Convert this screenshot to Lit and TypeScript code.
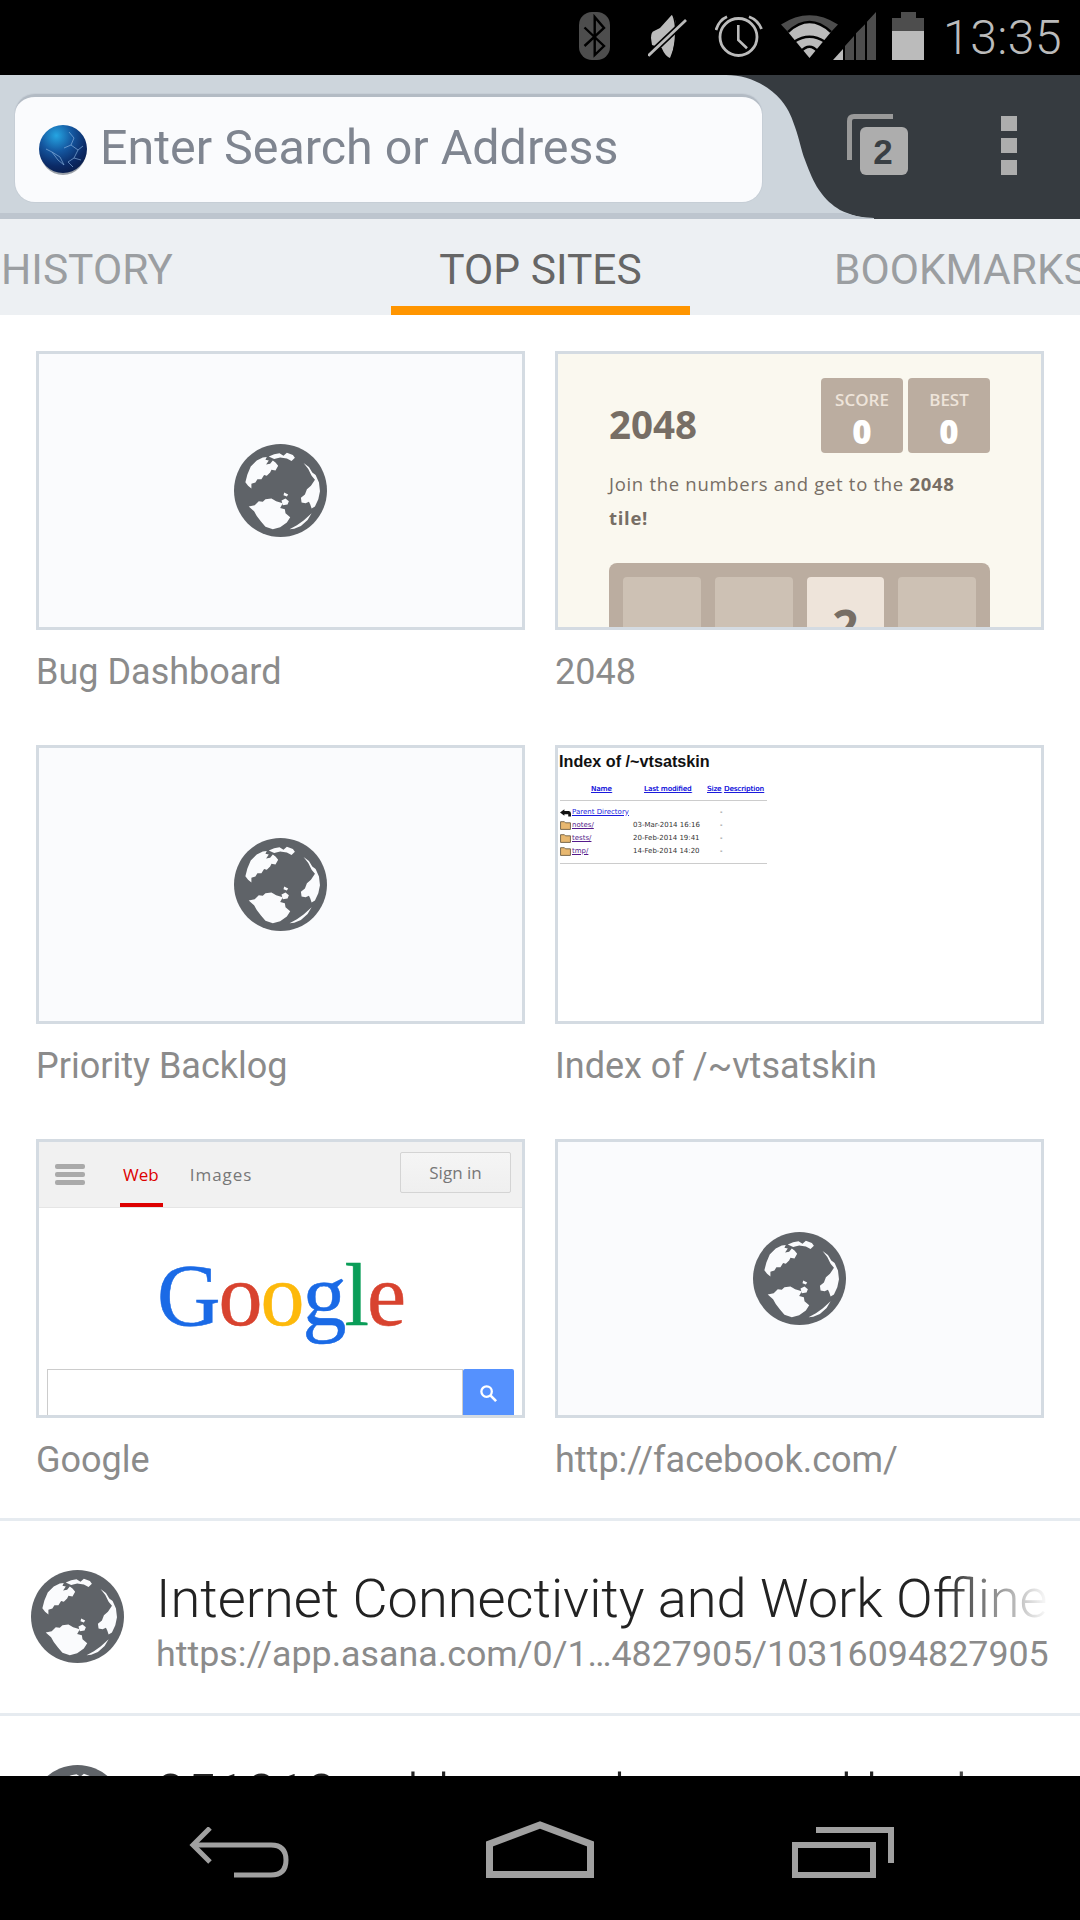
import { LitElement, css, html, svg } from 'lit'
import { customElement } from 'lit/decorators.js'

// globe drawn in the coordinates of the reference glyph, centre 303,270 r 139
const globe = (cls = 'globe') => html`<svg class=${cls} viewBox="164 131 278 278">
  <circle cx="303" cy="270" r="139" fill="#5f6368"></circle>
  ${svg`<g fill="#fafbfd">
    <polygon points="198,245 204,222 214,198 232,180 250,171 262,170 258,178 268,180 260,192 272,190 280,180 288,186 296,196 288,210 276,208 272,216 262,226 254,224 246,236 234,236 228,246 216,250 216,264 206,256"></polygon>
    <polygon points="268,168 284,162 300,159 312,166 322,157 340,164 346,172 336,182 322,174 302,171 284,176"></polygon>
    <polygon points="372,188 388,200 398,216 408,224 418,246 421,272 416,296 406,318 396,324 392,312 388,304 378,308 366,306 364,292 376,282 382,266 394,256 406,238 396,226 386,206"></polygon>
    <polygon points="208,318 226,314 238,302 250,304 258,296 276,294 290,302 310,308 302,322 316,326 318,338 332,350 322,366 302,380 280,386 258,378 244,362 232,346 224,332"></polygon>
    <polygon points="330,386 352,374 372,360 396,338 384,358 364,376 344,384"></polygon>
    <polygon points="306,300 318,294 328,302 324,312 310,314"></polygon>
    <polygon points="314,276 326,282 322,288 312,284"></polygon>
  </g>`}
</svg>`

const thumbGlobe = html`<div class="thumb blank">${globe()}</div>`

const game = html`<div class="thumb game">
  <div class="game-head">
    <span class="game-title">2048</span>
    <div class="scores">
      <div class="score"><span>SCORE</span><b>0</b></div>
      <div class="score"><span>BEST</span><b>0</b></div>
    </div>
  </div>
  <p class="game-intro">Join the numbers and get to the <b>2048 tile!</b></p>
  <div class="board">
    <div class="cell"></div>
    <div class="cell"></div>
    <div class="cell two">2</div>
    <div class="cell"></div>
  </div>
</div>`

const folder = html`<svg class="fold" viewBox="0 0 10 9"><path d="M0.5 1.5h3.5l1 1h4.5v6h-9z" fill="#e8b870" stroke="#5a4a30" stroke-width="0.7"></path></svg>`
const up = html`<svg class="fold" viewBox="0 0 10 9"><path d="M0 5L4 2V3.600H8Q10 3.600 10 6V8.500H7.500V6.500H4V8z" fill="#111"></path></svg>`

const indexRows = [
  { name: 'Parent Directory', date: '', icon: up, seen: false },
  { name: 'notes/', date: '03-Mar-2014 16:16', icon: folder, seen: true },
  { name: 'tests/', date: '20-Feb-2014 19:41', icon: folder, seen: true },
  { name: 'tmp/', date: '14-Feb-2014 14:20', icon: folder, seen: true }
]

const listing = html`<div class="thumb listing">
  <div class="index-title">Index of /~vtsatskin</div>
  <div class="index-table">
    <div class="index-head"><a class="c-name">Name</a><a class="c-date">Last modified</a><a class="c-size">Size</a><a>Description</a></div>
    <div class="index-rule"></div>
    ${indexRows.map((r) => html`<div class="index-row">
      ${r.icon}<span class="c-file"><a class=${r.seen ? 'seen' : ''}>${r.name}</a></span><span class="c-when">${r.date}</span><span>-</span>
    </div>`)}
    <div class="index-rule last"></div>
  </div>
</div>`

const google = html`<div class="thumb google">
  <div class="g-head">
    <div class="burger"><i></i><i></i><i></i></div>
    <span class="g-web">Web</span>
    <span class="g-images">Images</span>
    <span class="g-sign">Sign in</span>
  </div>
  <div class="g-logo"><span class="b">G</span><span class="r">o</span><span class="y">o</span><span class="b">g</span><span class="g">l</span><span class="r">e</span></div>
  <div class="g-search">
    <div class="g-input"></div>
    <div class="g-btn"><svg viewBox="0 0 20 20"><circle cx="8" cy="8" r="5.500" fill="none" stroke="#fff" stroke-width="2.400"></circle><path d="M12 12l6 6" stroke="#fff" stroke-width="2.800"></path></svg></div>
  </div>
</div>`

const sites = [
  { thumb: thumbGlobe, label: 'Bug Dashboard' },
  { thumb: game, label: '2048' },
  { thumb: thumbGlobe, label: 'Priority Backlog' },
  { thumb: listing, label: 'Index of /~vtsatskin' },
  { thumb: google, label: 'Google' },
  { thumb: thumbGlobe, label: 'http://facebook.com/' }
]

@customElement('app-root')
export class AppRoot extends LitElement {
  static styles = css`
    :host {
      display: flex;
      flex-direction: column;
      width: 1080px;
      height: 1920px;
      overflow: hidden;
      background: #fff;
      font-family: Roboto, sans-serif;
    }

    .status {
      flex: none;
      height: 75px;
      background: #000;
      display: flex;
      align-items: flex-start;
      color: #bbb;
    }
    .status svg { display: block; flex: none; margin-top: 12px; }
    .time {
      font-size: 48px;
      font-weight: 300;
      line-height: 75px;
      margin-left: 19px;
      letter-spacing: 0.5px;
    }
    .st-bt { margin-left: 579px; }
    .st-mute { margin-left: 38px; }
    .st-alarm { margin-left: 27px; }
    .st-wifi { margin-left: 18px; }
    .st-bars { margin-left: -6px; }
    .st-batt { margin-left: 15px; }

    .toolbar {
      flex: none;
      height: 144px;
      display: flex;
      background: #363b40;
    }
    .bar-light {
      width: 726px;
      background: #cdd5dc;
      border-bottom: 6px solid #bdc5ce;
      padding: 19px 0 0 15px;
      box-sizing: border-box;
      position: relative;
    }
    .url {
      width: 747px;
      height: 108px;
      box-sizing: border-box;
      background: #fafbfd;
      border-top: 3px solid #b3bbc4;
      border-radius: 20px;
      box-shadow: 0 0 0 1px #c6ced6;
      display: flex;
      align-items: center;
      position: relative;
      z-index: 1;
    }
    .fox {
      display: block;
      width: 50px;
      height: 52px;
      margin-left: 23px;
      flex: none;
    }
    .url span {
      margin-left: 12px;
      padding-bottom: 4px;
      font-size: 48.4px;
      color: #7f8590;
      white-space: nowrap;
    }
    .curve { display: block; flex: none; width: 154px; height: 144px; }
    .tools { flex: 1; position: relative; }
    .tabs-icon { position: absolute; left: -33px; top: 39px; width: 62px; height: 62px; }
    .tabs-num {
      position: absolute;
      left: -21px;
      top: 52px;
      width: 48px;
      height: 48px;
      text-align: center;
      line-height: 50px;
      font-family: "Liberation Sans", sans-serif;
      font-weight: 700;
      font-size: 35px;
      color: #3a3f44;
    }
    .menu {
      position: absolute;
      left: 121px;
      top: 41px;
      display: flex;
      flex-direction: column;
      gap: 7px;
    }
    .menu i { display: block; width: 16px; height: 15px; background: #adadad; }

    .tabs {
      flex: none;
      height: 96px;
      background: #edf0f3;
      display: flex;
      align-items: flex-start;
      overflow: hidden;
      position: relative;
      font-size: 42.5px;
      color: #9b9ea1;
    }
    .tab { position: absolute; top: 0; line-height: 101px; white-space: nowrap; }
    .tab.history { left: 1px; }
    .tab.top {
      left: 391px;
      width: 299px;
      height: 96px;
      box-sizing: border-box;
      text-align: center;
      color: #666;
      border-bottom: 9px solid #ff9500;
    }
    .tab.marks { left: 834px; }

    .grid {
      flex: none;
      display: grid;
      grid-template-columns: 489px 489px;
      column-gap: 30px;
      row-gap: 0;
      padding: 36px 36px 0;
    }
    .site { height: 394px; }
    .site:nth-child(n + 5) { height: 379px; }
    .thumb {
      width: 489px;
      height: 279px;
      box-sizing: border-box;
      border: 3px solid #d4dbe2;
      overflow: hidden;
      background: #fafbfd;
    }
    .site-label {
      font-size: 36px;
      color: #8b8b8b;
      margin-top: 20px;
      line-height: 44px;
      white-space: nowrap;
    }
    .blank { display: flex; align-items: center; justify-content: center; }
    .globe { width: 93px; height: 93px; display: block; }

    .game {
      background: #faf8ef;
      color: #776e65;
      padding: 24px 51px 0;
      font-family: "Open Sans", sans-serif;
    }
    .game-head { display: flex; justify-content: space-between; align-items: flex-start; height: 75px; }
    .game-title { font-size: 38.5px; font-weight: 700; line-height: 50px; margin-top: 21px; }
    .scores { display: flex; gap: 5px; }
    .score {
      width: 82px;
      height: 75px;
      border-radius: 4px;
      background: #bbada0;
      color: #eee4da;
      display: flex;
      flex-direction: column;
      align-items: center;
      font-size: 17px;
      font-weight: 600;
      padding-top: 13px;
      box-sizing: border-box;
      line-height: 18px;
    }
    .score b { color: #fff; font-size: 33px; line-height: 36px; margin-top: 5px; }
    .game-intro {
      margin: 14px 0 0;
      font-size: 18.5px;
      line-height: 34px;
      width: 370px;
      letter-spacing: 0.7px;
    }
    .board {
      margin-top: 28px;
      height: 90px;
      box-sizing: border-box;
      background: #bbada0;
      border-radius: 8px;
      padding: 14px;
      display: flex;
      gap: 14px;
      width: 381px;
    }
    .cell {
      flex: 1;
      height: 78px;
      background: #cdc1b4;
      border-radius: 4px;
      text-align: center;
      font-size: 46px;
      font-weight: 700;
      line-height: 96px;
    }
    .cell.two { background: #eee4da; }

    .listing {
      background: #fff;
      font-family: "Liberation Sans", sans-serif;
      color: #111;
      padding: 3px 0 0 1px;
    }
    .index-title { font-size: 16.2px; font-weight: 700; line-height: 20px; }
    .index-table {
      width: 207px;
      margin: 12px 0 0 1px;
      font-family: "DejaVu Sans", sans-serif;
      font-size: 7px;
    }
    .index-table a { color: #1a1add; text-decoration: underline; }
    .index-table a.seen { color: #551a8b; }
    .index-head { display: flex; height: 12px; line-height: 12px; white-space: nowrap; }
    .index-head a { flex: none; text-shadow: 0.3px 0 0 currentColor; }
    .c-name { margin-left: 31px; width: 53px; }
    .c-date { width: 63px; }
    .c-size { width: 17px; }
    .index-rule { height: 1px; background: #ccc; margin-top: 5px; margin-bottom: 4px; }
    .index-rule.last { margin-top: 6px; }
    .index-row { display: flex; align-items: center; height: 13px; white-space: nowrap; color: #333; }
    .fold { width: 11px; height: 10px; flex: none; margin-right: 1px; }
    .c-file { width: 61px; flex: none; }
    .c-when { width: 87px; flex: none; }

    .google { background: #fff; }
    .g-head {
      height: 66px;
      box-sizing: border-box;
      background: #f1f1f1;
      border-bottom: 1px solid #e5e5e5;
      display: flex;
      align-items: center;
      position: relative;
      font-family: "Open Sans", sans-serif;
      font-size: 17px;
      color: #777;
    }
    .burger { margin-left: 16px; width: 30px; display: flex; flex-direction: column; gap: 3px; }
    .burger i { display: block; height: 5px; background: #aaa; border-radius: 2px; }
    .g-web { margin-left: 38px; color: #dd0000; position: relative; }
    .g-web::after {
      content: '';
      position: absolute;
      left: -3px;
      right: -4px;
      top: 40px;
      height: 4px;
      background: #dd0000;
    }
    .g-images { margin-left: 31px; letter-spacing: 1px; }
    .g-sign {
      position: absolute;
      left: 361px;
      top: 10px;
      width: 111px;
      height: 41px;
      box-sizing: border-box;
      border: 1px solid #d4d4d4;
      border-radius: 2px;
      background: linear-gradient(#f5f5f5, #efefef);
      text-align: center;
      line-height: 39px;
    }
    .g-logo {
      height: 161px;
      text-align: center;
      font-family: "Liberation Serif", serif;
      font-size: 88px;
      letter-spacing: -2px;
      line-height: 120px;
      padding-top: 28px;
      box-sizing: border-box;
      -webkit-text-stroke: 0.5px currentColor;
    }
    .g-logo .b { color: #1a6ae6; }
    .g-logo .r { color: #d8432f; }
    .g-logo .y { color: #fdb90b; }
    .g-logo .g { color: #0a9d58; }
    .g-search { display: flex; margin-left: 8px; width: 467px; height: 50px; }
    .g-input { flex: 1; border: 1px solid #ccc; border-bottom: none; }
    .g-btn { width: 51px; background: #5591fe; border-radius: 2px 2px 0 0; display: flex; justify-content: center; padding-top: 15px; box-sizing: border-box; }
    .g-btn svg { width: 19px; height: 19px; }

    .rows { flex: 1; min-height: 0; overflow: hidden; }
    .row {
      border-top: 3px solid #e6ebf0;
      height: 192px;
      display: flex;
      align-items: flex-start;
      padding-left: 31px;
    }
    .row .globe { margin-top: 49px; flex: none; }
    .row-text { margin-left: 32px; width: 893px; white-space: nowrap; overflow: hidden; }
    .row-title {
      font-size: 54.2px;
      font-weight: 300;
      color: #222;
      line-height: 64px;
      margin-top: 46px;
      -webkit-mask-image: linear-gradient(to right, #000 88%, transparent 100%);
      mask-image: linear-gradient(to right, #000 88%, transparent 100%);
    }
    .row-url { font-size: 35.8px; color: #8b8b8b; line-height: 46px; margin-top: 0; }

    .nav {
      flex: none;
      height: 144px;
      background: #000;
      display: flex;
      align-items: flex-start;
    }
    .nav svg { display: block; flex: none; }
    .nav-back { margin: 51px 0 0 189px; }
    .nav-home { margin: 45px 0 0 197px; }
    .nav-recent { margin: 51px 0 0 198px; }
  `

  render () {
    return html`
      <div class="status">
        <svg class="st-bt" width="31" height="48" viewBox="0 0 31 48">
          <rect width="31" height="48" rx="13" fill="#4d4d4d"></rect>
          <path d="M5.500 15.500L25 34L15.700 43V5L25 16L5.500 34" fill="none" stroke="#000" stroke-width="2.400"></path>
        </svg>
        <svg class="st-mute" width="40" height="48" viewBox="0 0 40 48">
          <path d="M3 26Q3 20 6 19L12 16L23.700 3Q27 4 28 13Q29 30 22 46Q17 44 13.700 36L4 33z" fill="#bbb"></path>
          <path d="M25 3Q31 18 24 46" fill="none" stroke="#000" stroke-width="1.500"></path>
          <path d="M0 44L38 8" stroke="#000" stroke-width="6"></path>
          <path d="M0.300 43.700L38 8" stroke="#bbb" stroke-width="2.800"></path>
        </svg>
        <svg class="st-alarm" width="48" height="48" viewBox="0 0 48 48">
          <circle cx="23.500" cy="25" r="18.500" fill="none" stroke="#bbb" stroke-width="2.800"></circle>
          <path d="M23.300 13V28L32 36.300" fill="none" stroke="#bbb" stroke-width="2.600"></path>
          <path d="M1 18Q4 8 12 4.700M34 4.700Q43 8 46.500 17" fill="none" stroke="#bbb" stroke-width="2.800"></path>
        </svg>
        <svg class="st-wifi" width="58" height="48" viewBox="0 0 58 48">
          <path d="M0 12.500Q28.500 -6 57 12.500L50 20Q28.500 0 7 20z" fill="#4d4d4d"></path>
          <path d="M7 20Q28.500 0 50 20L28.500 46z" fill="#bbb"></path>
          <path d="M7 20Q28.500 0 50 20M13 29.700Q28.500 19.700 44 29.700M19.700 39.700Q28.500 29.700 37 39.700" fill="none" stroke="#000" stroke-width="2.400"></path>
        </svg>
        <svg class="st-bars" width="44" height="48" viewBox="0 0 44 48">
          <path d="M0 48L10 37V48z" fill="#bbb"></path>
          <path d="M12 34L21 24V48H12zM23 21.300L32 12.300V48H23zM34 9.700L43 0V48H34z" fill="#4d4d4d"></path>
        </svg>
        <svg class="st-batt" width="32" height="48" viewBox="0 0 32 48">
          <path d="M9 0H24V6H32V19H0V6H9z" fill="#4d4d4d"></path>
          <rect y="19" width="32" height="29" fill="#bbb"></rect>
        </svg>
        <span class="time">13:35</span>
      </div>

      <div class="toolbar">
        <div class="bar-light">
          <div class="url">
            <svg class="fox" viewBox="0 0 50 52">
              <defs>
                <radialGradient id="fox" cx="0.360" cy="0.220" r="0.850">
                  <stop offset="0" stop-color="#25a5e2"></stop>
                  <stop offset="0.400" stop-color="#14569f"></stop>
                  <stop offset="0.750" stop-color="#0b2a66"></stop>
                  <stop offset="1" stop-color="#0a1c48"></stop>
                </radialGradient>
              </defs>
              <ellipse cx="25" cy="27" rx="23" ry="24" fill="#9aa0a8"></ellipse>
              <circle cx="25" cy="25" r="24" fill="url(#fox)"></circle>
              <g fill="none" stroke="#8fb8e2" stroke-width="0.800" opacity="0.800">
                <path d="M31 8L36 14L33 21L40 26L36 34L30 38L35 43"></path>
                <path d="M8 25L14 28L20 36L26 41L22 33L14 28"></path>
                <path d="M33 21L26 24M40 26L45 22M36 34L43 36"></path>
              </g>
            </svg>
            <span>Enter Search or Address</span>
          </div>
        </div>
        <svg class="curve" viewBox="0 0 154 144">
          <rect width="154" height="144" fill="#363b40"></rect>
          <path d="M0 0C22 0 42 10 55 25C64 36 66 44 69 52C74 66 75 75 79 85C84 98 87 106 93 115C100 125 106 130 114 135C124 140 136 143 148 143V144H0z" fill="#cdd5dc"></path>
          <path d="M0 138H119C128 141 138 143 148 143V144H0z" fill="#bdc5ce"></path>
        </svg>
        <div class="tools">
          <svg class="tabs-icon" viewBox="0 0 62 62">
            <path d="M2.500 46V7Q2.500 2.500 7 2.500H46" fill="none" stroke="#999" stroke-width="5"></path>
            <rect x="13" y="13" width="48" height="48" rx="6" fill="#adadad"></rect>
          </svg>
          <span class="tabs-num">2</span>
          <div class="menu"><i></i><i></i><i></i></div>
        </div>
      </div>

      <div class="tabs">
        <span class="tab history">HISTORY</span>
        <span class="tab top">TOP SITES</span>
        <span class="tab marks">BOOKMARKS</span>
      </div>

      <div class="grid">
        ${sites.map((s) => html`<div class="site">${s.thumb}<div class="site-label">${s.label}</div></div>`)}
      </div>

      <div class="rows">
        <div class="row">
          ${globe()}
          <div class="row-text">
            <div class="row-title">Internet Connectivity and Work Offline</div>
            <div class="row-url">https://app.asana.com/0/1…4827905/10316094827905</div>
          </div>
        </div>
        <div class="row">
          ${globe()}
          <div class="row-text">
            <div class="row-title">951818 - able save home and load</div>
          </div>
        </div>
      </div>

      <div class="nav">
        <svg class="nav-back" width="100" height="51" viewBox="0 0 100 51" fill="none" stroke="#a0a0a0" stroke-width="5">
          <path d="M21 1L4 18L21 35"></path>
          <path d="M4 18H82Q97 18 97 33Q97 48 82 48H45"></path>
        </svg>
        <svg class="nav-home" width="108" height="57" viewBox="0 0 108 57" fill="none" stroke="#a0a0a0" stroke-width="7">
          <path d="M3.500 53.500V23L54 4L104.500 23V53.500z"></path>
        </svg>
        <svg class="nav-recent" width="102" height="51" viewBox="0 0 102 51" fill="none" stroke="#a0a0a0" stroke-width="6">
          <path d="M24 3H99V36"></path>
          <rect x="3" y="18" width="78" height="30"></rect>
        </svg>
      </div>
    `
  }
}
